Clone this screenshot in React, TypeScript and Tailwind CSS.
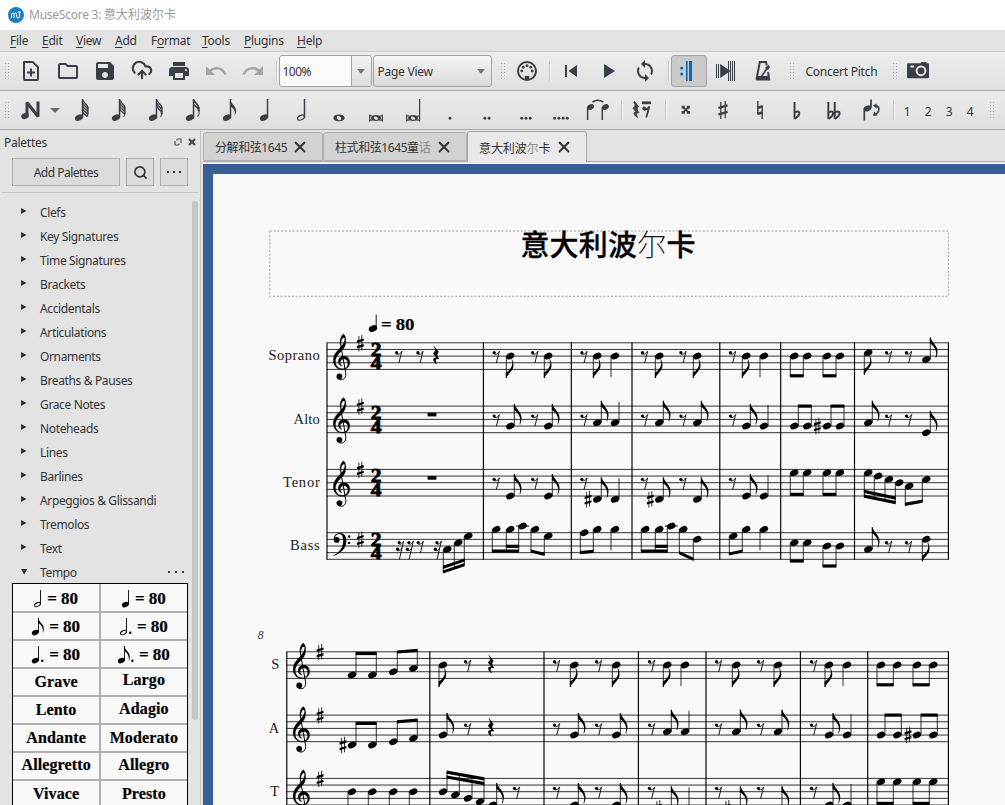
import React from "react";
import { CloudUpload, Search, X } from "lucide-react";
import { MdOutlineFolder, MdSave, MdPrint, MdUndo, MdRedo, MdSkipPrevious, MdPlayArrow, MdSync } from "react-icons/md";

const INK = "#3a3e46";
const SP = 6.65;

/* ---------- score engraving ---------- */

type Item =
  | { k: "n"; x: number; p: number; s: "u" | "d"; f?: boolean }
  | { k: "r8" | "r16" | "r4" | "r1"; x: number }
  | { k: "sh"; x: number; p: number }
  | { k: "b"; s: "u" | "d"; notes: [number, number][]; y1: number; y2: number; inner?: [number, number, number, number] };

const q = (x: number, p: number, s: "u" | "d" = "u"): Item => ({ k: "n", x, p, s });
const e = (x: number, p: number, s: "u" | "d" = "u"): Item => ({ k: "n", x, p, s, f: true });
const r = (x: number): Item => ({ k: "r8", x });
const r16 = (x: number): Item => ({ k: "r16", x });
const r4 = (x: number): Item => ({ k: "r4", x });
const r1 = (x: number): Item => ({ k: "r1", x });
const sh = (x: number, p: number): Item => ({ k: "sh", x, p });
const b = (
  s: "u" | "d",
  notes: [number, number][],
  y1: number,
  y2: number,
  inner?: [number, number, number, number],
): Item => ({ k: "b", s, notes, y1, y2, inner });

function Head({ x, y }: { x: number; y: number }) {
  return <ellipse cx={x} cy={y} rx="4.35" ry="3.05" transform={`rotate(-26 ${x} ${y})`} />;
}

function Sharp({ x, y }: { x: number; y: number }) {
  return (
    <g transform={`translate(${x} ${y})`}>
      <path d="M-1.4 -7.2V8.2M1.5 -8.2V7.2" stroke="#000" strokeWidth="0.8" />
      <path d="M-3.4 -2.1L3.4 -4.1V-1.8L-3.4 0.2zM-3.4 3.5L3.4 1.5V3.8L-3.4 5.8z" transform="translate(0 -0.6)" />
    </g>
  );
}

function EighthRest({ x, y }: { x: number; y: number }) {
  return (
    <g transform={`translate(${x} ${y})`}>
      <circle cx="-1.8" cy="-3.2" r="1.6" />
      <path d="M-2.6 -2.4C-0.6 -0.9 1.8 -1.6 3.3 -4.6L0.4 7" fill="none" stroke="#000" strokeWidth="0.9" />
    </g>
  );
}

function SixteenthRest({ x, y }: { x: number; y: number }) {
  return (
    <g transform={`translate(${x} ${y})`}>
      <circle cx="-0.8" cy="-3.2" r="1.6" />
      <circle cx="-2.4" cy="3.4" r="1.6" />
      <path
        d="M-1.6 -2.4C0.2 -0.9 2.2 -1.6 3.6 -4.6L-0.6 13.6M-3.2 4.2C-1.4 5.6 0.6 5 2 2.1"
        fill="none"
        stroke="#000"
        strokeWidth="0.9"
      />
    </g>
  );
}

function Flag({ x, y, up }: { x: number; y: number; up: boolean }) {
  return (
    <path
      transform={`translate(${x} ${y}) scale(1 ${up ? 1 : -0.92})`}
      d="M-0.4 0H0.3C0.8 4.2 7.3 8 7.2 13.8C7.2 16 6.6 18.4 5.8 20.4L5.2 20.2C6.7 16.2 5.9 12 3.2 9C2.2 7.9 1 6.6 -0.4 6Z"
    />
  );
}

function Treble({ x, y }: { x: number; y: number }) {
  return (
    <g transform={`translate(${x} ${y})`}>
      <path
        fillRule="evenodd"
        d="M10.2 -8.7C7.8 -7 6.4 -3.5 6.8 0.2L7.4 4.4C3.8 7.8 0 11.8 0 17.5C0 23 4 27 9 27C13.2 27 16.5 24 16.5 19.8C16.5 16 14 13.2 10.6 13.2C7.3 13.2 5 15.8 5 18.8C5 21.2 6.6 22.9 8.3 23.4L8.6 22.9C7.4 22 7 21 7 19.8C7 17.8 8.5 16.3 10.6 16.3C13 16.3 14.6 18 14.6 20.6C14.6 23.8 12.5 26 9.2 26C4.8 26 2.2 22.8 2.2 18.8C2.2 13.8 5.8 10.7 8.8 7.7C11.5 5 12.6 1.8 12.6 -2.5C12.6 -5.5 11.6 -7.8 10.2 -8.7ZM10.9 -5.4C11.6 -5 11.7 -3.5 11.2 -2C10.5 0.5 9.6 1.9 8.2 3.4L7.8 0.8C7.6 -2.5 9.2 -5.5 10.9 -5.4Z"
        stroke="#000"
        strokeWidth="0.25"
      />
      <path d="M7.7 4L12.4 30C13.1 34.2 11 36.9 8 36.9C6.4 36.9 5.2 36.3 4.6 35.4" fill="none" stroke="#000" strokeWidth="1" />
      <circle cx="6.1" cy="33.7" r="2.9" />
    </g>
  );
}

function Bass({ x, y }: { x: number; y: number }) {
  return (
    <g transform={`translate(${x} ${y})`}>
      <circle cx="3.3" cy="7.2" r="2.9" />
      <path d="M0.4 7C0.2 2.8 3 0.4 6.6 0.4C10.6 0.4 13 3.6 13 8.2C13 15.4 7.4 20.4 0.3 23.4L0 22.9C6.2 19.4 9.8 15 9.8 8.4C9.8 4.2 8.6 1.3 6 1.3C3.6 1.3 1.6 3 1.5 5.4Z" />
      <circle cx="15.7" cy="3.8" r="1.2" />
      <circle cx="15.7" cy="10.2" r="1.2" />
    </g>
  );
}

function Glyph({ it, top }: { it: Item; top: number }) {
  const Y = (p: number) => top + (p * SP) / 2;
  if (it.k === "r8") return <EighthRest x={it.x} y={top + 13.1} />;
  if (it.k === "r16") return <SixteenthRest x={it.x} y={top + 13.1} />;
  if (it.k === "r1") return <rect x={it.x - 4.4} y={top + 6.7} width="8.8" height="3.6" />;
  if (it.k === "r4")
    return (
      <path
        transform={`translate(${it.x} ${top})`}
        d="M-1.7 3.2L3 9.2C1 11.3 1 12.6 3.4 15.8L3 16.4C0.4 15.6 -1.2 17.2 1 20.8L0.6 21.4C-3.2 18.6 -4 14.6 0.6 14.8L-2.8 10.6C-0.2 8.2 0 6.6 -2.1 3.7Z"
      />
    );
  if (it.k === "sh") return <Sharp x={it.x} y={Y(it.p)} />;
  if (it.k === "n") {
    const up = it.s === "u";
    const sx = it.x + (up ? 4 : -4);
    const y = Y(it.p);
    const len = it.f ? 22 : 21;
    const end = y + (up ? -len : len);
    return (
      <g>
        <Head x={it.x} y={y} />
        <path d={`M${sx} ${y}V${end}`} stroke="#000" strokeWidth="0.8" />
        {it.f && <Flag x={sx} y={end} up={up} />}
      </g>
    );
  }
  const off = it.s === "u" ? 4 : -4;
  const first = it.notes[0][0];
  const last = it.notes[it.notes.length - 1][0];
  const at = (x: number) => top + it.y1 + ((it.y2 - it.y1) * (x - first)) / (last - first);
  const bar = (x1: number, y1: number, x2: number, y2: number) =>
    `M${x1 - 0.4} ${y1 - 1.6}L${x2 + 0.4} ${y2 - 1.6}V${y2 + 1.6}L${x1 - 0.4} ${y1 + 1.6}Z`;
  return (
    <g>
      {it.notes.map(([x, p]) => (
        <g key={x}>
          <Head x={x} y={Y(p)} />
          <path d={`M${x + off} ${Y(p)}V${at(x)}`} stroke="#000" strokeWidth="0.8" />
          {p === -2 && <path d={`M${x - 6.5} ${Y(-2)}h13`} stroke="#000" strokeWidth="1" />}
        </g>
      ))}
      <path d={bar(first + off, top + it.y1, last + off, top + it.y2)} />
      {it.inner && (
        <path d={bar(it.inner[0] + off, top + it.inner[1], it.inner[2] + off, top + it.inner[3])} />
      )}
    </g>
  );
}

const restsA = [496, 534.5, 583.7, 644.3, 682.7, 732.3, 888.3, 908.3].map(r);
const restsB = [556.3, 598.3, 651.3, 718.3, 760.3, 813.3].map(r);

const soprano1: Item[] = [
  r(398.5), r(419.7), r4(435.8), ...restsA,
  e(510.3, 4, "d"), e(548.3, 4, "d"), e(597.3, 4, "d"), q(615, 4, "d"),
  e(659.3, 4, "d"), e(697.3, 4, "d"), e(746.3, 4, "d"), q(764, 4, "d"),
  b("d", [[794.3, 4], [807.3, 4]], 33, 33), b("d", [[827, 4], [840, 4]], 33, 33),
  e(868.3, 3, "d"), e(926.3, 5),
];
const alto1: Item[] = [
  r1(432), ...restsA,
  e(510.3, 6), e(548.3, 6), e(597.3, 5), q(615, 5), e(659.3, 5), e(697.3, 5), e(746.3, 6), q(764, 6),
  b("u", [[794.3, 6], [807.3, 6]], 0, 0), sh(817.3, 6), b("u", [[827, 6], [840, 6]], 0, 0),
  e(868.3, 5), e(926.3, 8),
];
const tenor1: Item[] = [
  r1(432), ...restsA.slice(0, 6),
  e(510.3, 8), e(548.3, 8), sh(588, 9), e(597.3, 9), q(615, 9), sh(650.3, 9), e(659.3, 9), e(697.3, 9),
  e(746.3, 8), q(764, 8),
  b("d", [[794.3, 1], [807.3, 1]], 25, 25), b("d", [[827, 1], [840, 1]], 25, 25),
  b("d", [[868.3, 1], [878.3, 2], [889, 3], [899.3, 4]], 26.7, 33.3, [868.3, 22, 899.3, 28.7]),
  b("d", [[909.3, 5], [926.3, 3]], 35, 31.7),
];
const bass1: Item[] = [
  r16(400), r16(409.7), r(420), r16(437.7),
  b("d", [[447.3, 5], [458.3, 3], [468.3, 1]], 39.3, 32, [447.3, 34.6, 468.3, 27.3]),
  b("d", [[496.3, -1], [510.3, -1], [522.7, -2]], 18.4, 18.4, [510.3, 13.6, 522.7, 13.6]),
  b("d", [[535, -1], [548.3, 1]], 18.3, 21.7),
  b("d", [[584.3, 0], [597.3, -1]], 20, 18.7), q(615, -1, "d"),
  b("d", [[645.3, -1], [659.3, -1], [671.3, -2]], 18.4, 18.4, [659.3, 13.6, 671.3, 13.6]),
  b("d", [[683.3, -1], [697.3, 2]], 20, 26.7),
  b("d", [[733.3, 1], [746.3, -1]], 21.3, 18.3), q(764, -1, "d"),
  b("d", [[794.3, 3], [807.3, 3]], 28.3, 28.3), b("d", [[827, 4], [840, 4]], 33.3, 33.3),
  e(868.3, 5), r(888.3), r(908.3), e(926.3, 2, "d"),
];
const soprano2: Item[] = [
  b("u", [[352, 7], [372.3, 7]], 1.7, 1.7), b("u", [[393.3, 6], [413.3, 5]], 0.2, -1.4),
  e(443, 4, "d"), r(467.3), r4(490.7), ...restsB,
  e(574.3, 4, "d"), e(616.3, 4, "d"), e(667.3, 4, "d"), q(685, 4, "d"),
  e(736.3, 4, "d"), e(778, 4, "d"), e(829, 4, "d"), q(847, 4, "d"),
  b("d", [[881, 4], [897.3, 4]], 33, 33), b("d", [[917, 4], [933.3, 4]], 33, 33),
];
const alto2: Item[] = [
  sh(343, 9), b("u", [[352, 9], [372.3, 9]], 8.3, 8.3), b("u", [[393.3, 8], [413.3, 7]], 6.8, 4.9),
  e(443, 6), r(467.3), r4(490.7), ...restsB,
  e(574.3, 6), e(616.3, 6), e(667.3, 5), q(685, 5), e(736.3, 5), e(778, 5), e(829, 6), q(847, 6),
  b("u", [[881, 6], [897.3, 6]], 0, 0), sh(908, 6), b("u", [[917, 6], [933.3, 6]], 0, 0),
];
const tenor2: Item[] = [
  b("d", [[352, 4], [372.3, 4]], 33, 33), b("d", [[393.3, 4], [413.3, 4]], 33, 33),
  b("u", [[443, 4], [455.3, 5], [468, 6], [480, 7]], -6.2, 0.5, [443, -1.4, 480, 5.3]),
  e(492.7, 8), r(516.3), ...restsB,
  e(574.3, 8), e(616.3, 8), sh(658.3, 9), e(667.3, 9), q(685, 9), sh(727.3, 9), e(736.3, 9), e(778, 9),
  e(829, 8), q(847, 8),
  b("d", [[881, 1], [897.3, 1]], 25, 25), b("d", [[917, 1], [933.3, 1]], 25, 25),
];

function System({
  left, tops, bars, voices, names, bottom, time,
}: {
  left: number; tops: number[]; bars: number[]; voices: Item[][]; names: [string, number][]; bottom: number; time?: boolean;
}) {
  return (
    <g>
      {tops.map((t) =>
        [0, 1, 2, 3, 4].map((i) => (
          <path key={`${t}-${i}`} d={`M${left} ${t + i * SP}H948.8`} stroke="#111" strokeWidth="0.85" />
        )),
      )}
      {[left, ...bars].map((x) => (
        <path key={x} d={`M${x} ${tops[0] - 0.4}V${bottom}`} stroke="#000" strokeWidth="1.15" />
      ))}
      {tops.map((t, i) => {
        const bass = i === 3;
        return (
          <g key={t}>
            {bass ? <Bass x={left + 6.4} y={t} /> : <Treble x={left + 6.3} y={t} />}
            <Sharp x={left + 33.3} y={(bass ? t + SP : t) + 0.4} />
            {time && (
              <g fontFamily="Liberation Serif, serif" fontWeight="700" fontSize="18.5" stroke="#000" strokeWidth="0.8">
                <text x={left + 43.8} y={t + 12.9} textLength="10.4" lengthAdjust="spacingAndGlyphs">2</text>
                <text x={left + 43.8} y={t + 26.4} textLength="10.4" lengthAdjust="spacingAndGlyphs">4</text>
              </g>
            )}
            <text
              x={left - 7.5 - names[i][1]}
              y={t + 17.6}
              fontSize="14.5"
              fontFamily="Liberation Serif, serif"
              textLength={names[i][1]}
              fill="#222"
            >
              {names[i][0]}
            </text>
            {voices[i].map((it, j) => (
              <Glyph key={j} it={it} top={t} />
            ))}
          </g>
        );
      })}
    </g>
  );
}

function Score() {
  return (
    <svg className="block" width="792" height="507" viewBox="213 298 792 507">
      <Head x={373} y={328.6} />
      <path d="M376.2 328V314.6" stroke="#000" strokeWidth="0.9" />
      <text x="381" y="329.6" fontSize="16" fontWeight="700" fontFamily="Liberation Serif, serif" textLength="33" lengthAdjust="spacingAndGlyphs" stroke="#000" strokeWidth="0.2">
        = 80
      </text>
      <System
        left={327}
        tops={[342.8, 406.1, 469.4, 532.7]}
        bars={[483.4, 571.3, 632, 719.8, 780.7, 854.5, 948.4]}
        voices={[soprano1, alto1, tenor1, bass1]}
        names={[["Soprano", 51], ["Alto", 26], ["Tenor", 36.5], ["Bass", 29.5]]}
        bottom={559.7}
        time
      />
      <text x="257.8" y="639" fontSize="11.5" fontStyle="italic" fontFamily="Liberation Serif, serif" fill="#333">8</text>
      <System
        left={286.8}
        tops={[651.8, 715.1, 778.4]}
        bars={[429.8, 544, 638.4, 706, 800.4, 867.7, 948.4]}
        voices={[soprano2, alto2, tenor2]}
        names={[["S", 8], ["A", 10.5], ["T", 9]]}
        bottom={810}
      />
    </svg>
  );
}

/* ---------- toolbars ---------- */

function Grip({ className = "" }: { className?: string }) {
  return (
    <svg className={`shrink-0 ${className}`} width="5" height="17" fill="#aeaeae">
      {[0, 3, 6, 9, 12, 15].map((y) => (
        <g key={y}>
          <rect x="0" y={y} width="1" height="1" />
          <rect x="3" y={y} width="1" height="1" />
        </g>
      ))}
    </svg>
  );
}

function Sep({ className = "" }: { className?: string }) {
  return <div className={`h-5 w-[2px] shrink-0 border-l border-[#c4c4c4] bg-[#f8f8f8] ${className}`} />;
}

function Btn({ children, className = "" }: { children: React.ReactNode; className?: string }) {
  return <div className={`flex h-8 w-[37px] shrink-0 items-center justify-center text-[#3a3e46] ${className}`}>{children}</div>;
}

function I({ children, className = "" }: { children: React.ReactNode; className?: string }) {
  return (
    <svg width="24" height="24" viewBox="0 0 24 24" fill={INK} className={`overflow-visible ${className}`}>
      {children}
    </svg>
  );
}

function NoteIcon({ flags = 0, open = false }: { flags?: number; open?: boolean }) {
  return (
    <I>
      {open ? (
        <ellipse cx="9" cy="19.6" rx="3.7" ry="2.2" transform="rotate(-28 9 19.6)" fill="none" stroke={INK} strokeWidth="1.3" />
      ) : (
        <ellipse cx="9" cy="19.6" rx="4.3" ry="2.9" transform="rotate(-25 9 19.6)" />
      )}
      <path d="M12.5 19.5V1" stroke={INK} strokeWidth="1.5" />
      {flags === 1 && <path d="M12.3 1.5C12.8 6 18.4 8 18.2 13C18.2 14.8 17.4 16.4 16.4 18C17.8 13.5 16.2 10.6 12.3 8.6Z" />}
      {flags > 1 &&
        Array.from({ length: flags }, (_, k) => (
          <path
            key={k}
            d={`M12.8 ${2 + k * (flags === 2 ? 4.5 : 3)}C13.4 ${5 + k * 3} 18 ${6 + k * 3} 18 ${10.5 + k * (flags > 3 ? 2 : 3)}`}
            fill="none"
            stroke={INK}
            strokeWidth={flags === 2 ? 1.7 : 1.3}
          />
        ))}
      {flags > 1 && <path d="M18 9V16L16.6 19" fill="none" stroke={INK} strokeWidth="1" />}
    </I>
  );
}

const Dots = ({ n, dx = 0 }: { n: number; dx?: number }) => (
  <I>
    {Array.from({ length: n }, (_, i) => (
      <circle key={i} cx={12 + dx + (i - (n - 1) / 2) * 4.2} cy="20.3" r="1.45" />
    ))}
  </I>
);

const flatPath = "M0.8 0V14.6M0.8 9.6C2.6 7.6 5 7.8 5 10C5 12.2 3 13.2 0.8 14.8";

function DropArrow() {
  return (
    <svg width="8" height="5" fill="#777">
      <path d="M0 0H8L4 5Z" />
    </svg>
  );
}

const menus = ["File", "Edit", "View", "Add", "Format", "Tools", "Plugins", "Help"];
const menuWidths = ["w-[32px]", "w-[34px]", "w-[39px]", "w-[36px]", "w-[51px]", "w-[42px]", "w-[53px]", "w-[34px]"];
const menuKeys = [0, 0, 0, 0, 1, 0, 0, 0];

function Menu() {
  return (
    <div className="flex h-[21px] items-center bg-[#e3e3e3] pl-[10px] text-[#333]">
      {menus.map((m, i) => (
        <div key={m} className={`shrink-0 whitespace-nowrap ${menuWidths[i]}`}>
          {m.slice(0, menuKeys[i])}
          <span className="underline underline-offset-2">{m[menuKeys[i]]}</span>
          {m.slice(menuKeys[i] + 1)}
        </div>
      ))}
    </div>
  );
}

function MainToolbar() {
  return (
    <div className="flex h-10 items-center border-b border-[#ababab] border-t border-t-[#c8c8c8] bg-linear-to-b from-[#ededed] to-[#e0e0e0] pl-[5px]">
      <Grip className="mr-[2.5px]" />
      <Btn>
        <I>
          <path d="M5 2.9H13.6L19 8.3V19.4Q19 21 17.4 21H6.6Q5 21 5 19.4Z" fill="none" stroke={INK} strokeWidth="2" strokeLinejoin="round" />
          <path d="M12 9.5V17.5M8 13.5H16" stroke={INK} strokeWidth="2" />
        </I>
      </Btn>
      <Btn><MdOutlineFolder size={24} /></Btn>
      <Btn><MdSave size={24} /></Btn>
      <Btn>
        <CloudUpload size={22} strokeWidth={2.3} className="-mt-[2px]" />
      </Btn>
      <Btn><MdPrint size={24} /></Btn>
      <Btn className="text-[#a5a5a5]!"><MdUndo size={24} /></Btn>
      <Btn className="text-[#a5a5a5]!"><MdRedo size={24} /></Btn>
      <Sep className="ml-1 mr-px" />
      <div className="flex h-8 w-[93px] shrink-0 overflow-hidden rounded-[3px] border border-[#a3a3a3] bg-[#fafafa]">
        <div className="flex flex-1 items-center pt-[2px] pl-[3px] tracking-[-0.5px]">100%</div>
        <div className="flex w-5 items-center justify-center border-l border-[#a3a3a3] bg-linear-to-b from-[#f4f4f4] to-[#dcdcdc]"><DropArrow /></div>
      </div>
      <div className="ml-px flex h-8 w-[119px] shrink-0 items-center justify-between rounded-[3px] border border-[#a3a3a3] bg-linear-to-b from-[#f6f6f6] to-[#d9d9d9] pl-1 pr-[6px]">
        <span className="pt-[2px]">Page View</span>
        <DropArrow />
      </div>
      <Grip className="ml-[9px] mr-[2.5px]" />
      <Btn>
        <I>
          <circle cx="12" cy="12" r="9" fill="none" stroke={INK} strokeWidth="2" />
          <circle cx="6.8" cy="12" r="1.4" /><circle cx="8.3" cy="8.2" r="1.4" /><circle cx="12" cy="6.7" r="1.4" />
          <circle cx="15.7" cy="8.2" r="1.4" /><circle cx="17.2" cy="12" r="1.4" />
          <rect x="9.8" y="17" width="4.4" height="4" />
        </I>
      </Btn>
      <Sep className="ml-[3.5px] mr-[2px]" />
      <Btn><MdSkipPrevious size={24} /></Btn>
      <Btn><MdPlayArrow size={24} /></Btn>
      <Btn><MdSync size={24} /></Btn>
      <Sep className="ml-[4px] mr-px" />
      <div className="flex h-8 w-[36px] shrink-0 items-center justify-center rounded-[3px] border border-[#a5a5a5] bg-[#cacaca]">
        <svg width="24" height="24" fill="#0a66c2">
          <circle cx="4.7" cy="9" r="1.5" /><circle cx="4.7" cy="15" r="1.5" />
          <rect x="9" y="2" width="1.6" height="20" /><rect x="12" y="2" width="3" height="20" />
        </svg>
      </div>
      <Btn>
        <I>
          <path d="M3.5 5V19M5.5 5V19M15.5 2V22M17.5 2V22M19.5 2V22M21.5 2V22" stroke={INK} strokeWidth="1" />
          <path d="M7.2 5L17.5 12L7.2 19Z" />
        </I>
      </Btn>
      <Btn>
        <I className="ml-[2px]">
          <path d="M5.5 20.5L8.8 3H15L15.8 6.5M5.2 20.5H18.2L17 13" fill="none" stroke={INK} strokeWidth="2" />
          <path d="M10.5 17.5L18 6.5" stroke={INK} strokeWidth="1.6" />
          <path d="M14 9L17 6.5L19 8L17 11Z" /><path d="M5.6 17H17.8V21H5Z" />
        </I>
      </Btn>
      <Grip className="ml-[9px] mr-[11px]" />
      <div className="w-[87px] shrink-0 pt-[2px] whitespace-nowrap">Concert Pitch</div>
      <Grip className="mr-[2px]" />
      <Btn>
        <I>
          <path fillRule="evenodd" d="M2 4.2Q1 4.2 1 5.5V18Q1 19.2 2.4 19.2H21.6Q23 19.2 23 18V5.5Q23 4.2 21.6 4.2H20.5V3H15.5L14.6 4.2ZM15 6.4A5.4 5.4 0 1 1 15 17.2A5.4 5.4 0 1 1 15 6.4ZM4.4 6.5H8V8.6H4.4Z" />
          <circle cx="15" cy="11.8" r="3.4" />
        </I>
      </Btn>
    </div>
  );
}

function NoteToolbar() {
  return (
    <div className="flex h-[39px] items-center border-b border-[#ababab] bg-linear-to-b from-[#ebebeb] to-[#dfdfdf] pl-[5px]">
      <Grip className="mr-[2.5px]" />
      <Btn>
        <I>
          <path d="M8 18V4.5L19 18.5V3.5" fill="none" stroke={INK} strokeWidth="3" strokeLinejoin="bevel" />
          <ellipse cx="6" cy="18" rx="3.8" ry="3" transform="rotate(-20 6 18)" />
        </I>
      </Btn>
      <div className="flex w-[14px] pl-0"><svg width="10" height="5" fill="#6a6a6a"><path d="M0 0H10L5 5Z" /></svg></div>
      <Btn><NoteIcon flags={5} /></Btn>
      <Btn><NoteIcon flags={4} /></Btn>
      <Btn><NoteIcon flags={3} /></Btn>
      <Btn><NoteIcon flags={2} /></Btn>
      <Btn><NoteIcon flags={1} /></Btn>
      <Btn><NoteIcon /></Btn>
      <Btn><NoteIcon open /></Btn>
      <Btn>
        <I className="-ml-1"><path fillRule="evenodd" d="M6.4 20C6.4 15.4 17.6 15.4 17.6 20C17.6 24.4 6.4 24.4 6.4 20ZM9.8 19C9.6 22 14 23.6 14.2 21C14.4 18 10 16.6 9.8 19Z" /></I>
      </Btn>
      <Btn>
        <I className="-ml-1">
          <path fillRule="evenodd" d="M7 20C7 16 17 16 17 20C17 24 7 24 7 20ZM9.8 19.4C9.6 21.6 14 22.8 14.2 20.8C14.4 18.6 10 17.4 9.8 19.4Z" />
          <path d="M5.7 16.5V23.5M18.3 16.5V23.5M5.7 18H8.5M5.7 22.2H8.5M15.5 18H18.3M15.5 22.2H18.3" stroke={INK} strokeWidth="1.2" />
        </I>
      </Btn>
      <Btn>
        <I className="-ml-1">
          <path fillRule="evenodd" d="M7 20C7 16 17 16 17 20C17 24 7 24 7 20ZM9.8 19.4C9.6 21.6 14 22.8 14.2 20.8C14.4 18.6 10 17.4 9.8 19.4Z" />
          <path d="M5.7 16.5V23.5M18.6 1V23.5M5.7 18H8.5M5.7 22.2H8.5M15.5 18H18.3M15.5 22.2H18.3" stroke={INK} strokeWidth="1.2" />
        </I>
      </Btn>
      <Btn><Dots n={1} dx={-2} /></Btn>
      <Btn><Dots n={2} dx={-2} /></Btn>
      <Btn><Dots n={3} /></Btn>
      <Btn><Dots n={4} dx={-2} /></Btn>
      <Btn>
        <I>
          <ellipse cx="2.6" cy="9" rx="3.5" ry="2.6" transform="rotate(-24 2.6 9)" />
          <ellipse cx="17.4" cy="9" rx="3.5" ry="2.6" transform="rotate(-24 17.4 9)" />
          <path d="M-0.4 9V22M14.3 9V22" stroke={INK} strokeWidth="1.5" />
          <path d="M4.4 4.2Q9.8 0.4 15.4 4.2" fill="none" stroke={INK} strokeWidth="1.6" />
        </I>
      </Btn>
      <Sep className="ml-[2px]" />
      <Btn>
        <I>
          <path d="M5.5 3.5L9.5 8.5C7.6 10.6 7.8 11.6 10 14.8C7.4 14.4 6.8 16 8.5 19.4C5 17.6 3.6 14.4 7 13.8L4 10.4C6.4 8.4 6.6 7 4.8 4Z" stroke={INK} strokeWidth="0.9" />
          <rect x="13" y="3.4" width="9" height="2.8" />
          <circle cx="15.2" cy="10.4" r="1.9" />
          <path d="M14.8 11.6Q17.8 12.4 20.4 8.6L17.2 19.5" fill="none" stroke={INK} strokeWidth="1.8" />
        </I>
      </Btn>
      <Sep className="ml-[5px]" />
      <Btn>
        <I><path d="M9.8 8.8L15.8 14.6M15.8 8.8L9.8 14.6" stroke={INK} strokeWidth="1.8" /><path d="M8.6 7.8h3.2v2.8H8.6zM13.8 7.8h3.2v2.8h-3.2zM8.6 13h3.2v2.8H8.6zM13.8 13h3.2v2.8h-3.2z" /></I>
      </Btn>
      <Btn>
        <I>
          <path d="M10.8 4V21M15.2 3V20" stroke={INK} strokeWidth="1.3" />
          <path d="M8.4 10L17.6 7.4M8.4 16.4L17.6 13.8" stroke={INK} strokeWidth="2.3" />
        </I>
      </Btn>
      <Btn>
        <I><path d="M10.8 3V16.4M15.2 7.5V21" stroke={INK} strokeWidth="1.4" /><path d="M10.8 9.8L15.2 8.4M10.8 15.8L15.2 14.4" stroke={INK} strokeWidth="2.6" /></I>
      </Btn>
      <Btn>
        <I><g transform="translate(9.6 4) scale(1.15)"><path d={flatPath} fill="none" stroke={INK} strokeWidth="1.7" /></g></I>
      </Btn>
      <Btn>
        <I>
          <g transform="translate(6.4 4) scale(1.15)"><path d={flatPath} fill="none" stroke={INK} strokeWidth="1.7" /></g>
          <g transform="translate(12.8 4) scale(1.15)"><path d={flatPath} fill="none" stroke={INK} strokeWidth="1.7" /></g>
        </I>
      </Btn>
      <Btn>
        <I className="ml-1">
          <ellipse cx="7.6" cy="10.4" rx="4" ry="2.8" transform="rotate(-24 7.6 10.4)" />
          <path d="M4.3 10.5V22.5M11 1.5V9.5" stroke={INK} strokeWidth="1.7" />
          <path d="M14.5 8.2C20 6.5 20.5 14 14.5 17.2" fill="none" stroke={INK} strokeWidth="1.7" />
          <path d="M13 7.5L16.6 5.6V10.6ZM12.8 17.8L14.4 13.4L17.4 17.6Z" />
        </I>
      </Btn>
      <Sep className="ml-[4px] mr-[2px]" />
      {["1", "2", "3", "4"].map((n) => (
        <div key={n} className="w-[21px] shrink-0 pt-[3px] text-center">{n}</div>
      ))}
      <Grip className="ml-[9px]" />
    </div>
  );
}

/* ---------- palettes ---------- */

const palettes = [
  "Clefs", "Key Signatures", "Time Signatures", "Brackets", "Accidentals", "Articulations", "Ornaments",
  "Breaths & Pauses", "Grace Notes", "Noteheads", "Lines", "Barlines", "Arpeggios & Glissandi", "Tremolos", "Text",
];

function MiniNote({ open, flag, dot }: { open?: boolean; flag?: boolean; dot?: boolean }) {
  return (
    <svg width={(flag ? 12 : 8) + (dot ? 4 : 0)} height="18" className="shrink-0 overflow-visible">
      {open ? (
        <ellipse cx="3.4" cy="14.6" rx="3.2" ry="1.8" transform="rotate(-28 3.4 14.6)" fill="none" stroke="#000" strokeWidth="0.9" />
      ) : (
        <ellipse cx="3.4" cy="14.6" rx="3.7" ry="2.5" transform="rotate(-26 3.4 14.6)" />
      )}
      <path d="M6.5 14.5V0" stroke="#000" strokeWidth="0.9" />
      {flag && <path d="M6.3 0C6.8 4 11.8 6 11.8 10.4C11.8 12.4 11.4 13.6 10.8 15C11.4 10.8 10 7 6.3 5Z" />}
      {dot && <circle cx={flag ? 14.4 : 10.2} cy="14.8" r="1.2" />}
    </svg>
  );
}

const tempos: [React.ReactNode, React.ReactNode][] = [
  [<MiniNote open />, <MiniNote />],
  [<MiniNote flag />, <MiniNote open dot />],
  [<MiniNote dot />, <MiniNote flag dot />],
];
const words: [string, string, string, string][] = [
  ["Grave", "Largo", "pt-[4px]", "pt-[2px]"],
  ["Lento", "Adagio", "pt-[4px]", "pt-[3px]"],
  ["Andante", "Moderato", "pt-[4px]", "pt-[4px]"],
  ["Allegretto", "Allegro", "pt-[3px]", "pt-[3px]"],
  ["Vivace", "Presto", "pt-[4px]", "pt-[4px]"],
];

function Ellipsis() {
  return (
    <>
      <i className="size-[2px] bg-[#333]" />
      <i className="size-[2px] bg-[#333]" />
      <i className="size-[2px] bg-[#333]" />
    </>
  );
}

function Palettes() {
  return (
    <div className="relative h-[675px] w-[201px] shrink-0 overflow-hidden border-r border-[#c2c2c2] bg-[#e3e3e3] tracking-[-0.36px]">
      <div className="flex h-[23px] items-center pl-1 pr-[3px]">
        <span className="flex-1 pt-[2px] tracking-[-0.25px]">Palettes</span>
        <svg width="8" height="8" className="mr-[5px]" fill="none" stroke="#555" strokeWidth="1.2">
          <path d="M3 1H7V5M5 7H1V3M3 1V2.5M5 7V5.5" />
        </svg>
        <X size={10} strokeWidth={4.5} color="#444" />
      </div>
      <div className="mt-[5px] flex h-7 gap-[6px] pl-3">
        <div className="flex w-[108px] items-center justify-center border border-[#adadad] bg-[#dcdcdc] pt-[2px] tracking-[-0.5px]">Add Palettes</div>
        <div className="flex w-7 items-center justify-center border border-[#adadad] bg-[#dcdcdc]"><Search size={15} strokeWidth={2.6} color="#333" /></div>
        <div className="flex w-7 items-center justify-center gap-1 border border-[#adadad] bg-[#dcdcdc]">
          <Ellipsis />
        </div>
      </div>
      <div className="mx-[2px] mt-[6px] h-px bg-[#c6c6c6]" />
      <div className="pt-[7px]">
        {palettes.map((p) => (
          <div key={p} className="flex h-6 items-center pl-[21px]">
            <svg width="6" height="8" className="mb-[2px] mr-[13px]" fill="#333"><path d="M0 1L5.5 4L0 7Z" /></svg>
            <span className="pt-[2px]">{p}</span>
          </div>
        ))}
        <div className="flex h-6 items-center pl-5 pr-[15px]">
          <svg width="8" height="7" className="mb-[2px] mr-3" fill="#333"><path d="M1 1H7.4L4.2 6.4Z" /></svg>
          <span className="flex-1 pt-[2px]">Tempo</span>
          <span className="mr-px flex gap-[5px]"><Ellipsis /></span>
        </div>
      </div>
      <div className="ml-3 mt-[-1px] grid w-[176px] grid-cols-2 gap-x-[1.5px] gap-y-[1.5px] border border-b-0 border-black bg-[#b0b0b0] font-['Liberation_Serif',serif] tracking-normal text-black">
        {tempos.flat().map((t, i) => (
          <div key={i} className={`flex items-center justify-center gap-[5px] bg-[#f9f9f9] pt-[2px] ${i < 2 ? "h-[27px]" : "h-[26.5px]"}`}>
            {t}
            <span className="text-[17px] leading-none font-bold whitespace-nowrap [-webkit-text-stroke:0.2px_black]">= 80</span>
          </div>
        ))}
        {words.map(([a, c, pa, pc]) => (
          <React.Fragment key={a}>
            <div className={`h-[26.5px] bg-[#f9f9f9] text-center text-[16px] leading-[18px] font-bold tracking-[0.12px] [-webkit-text-stroke:0.2px_black] ${pa}`}>{a}</div>
            <div className={`h-[26.5px] bg-[#f9f9f9] text-center text-[16px] leading-[18px] font-bold tracking-[0.12px] [-webkit-text-stroke:0.2px_black] ${pc}`}>{c}</div>
          </React.Fragment>
        ))}
      </div>
      <div className="absolute top-[71px] left-[192px] h-[519px] w-[6px] rounded-full bg-[#c6c6c6]" />
    </div>
  );
}

/* ---------- documents ---------- */

function Tabs() {
  const idle = "flex h-[29px] items-center rounded-t-[3px] border border-[#b0b0b0] bg-[#d2d2d2] pl-[11px]";
  const label = "whitespace-nowrap pt-[3px]";
  return (
    <div className="flex h-8 items-end border-b border-[#b0b0b0] text-[12px] tracking-[-0.42px]">
      <div className={`${idle} w-[120px]`}><span className={`${label} w-[76px]`}>分解和弦1645</span><X size={18} strokeWidth={2.5} color="#333" /></div>
      <div className={`${idle} w-[144px]`}><span className={`${label} w-[100px]`}>柱式和弦1645童<span className="text-[#888]">话</span></span><X size={18} strokeWidth={2.5} color="#333" /></div>
      <div className="-mb-px flex h-[31px] w-[120px] items-center rounded-t-[3px] border border-b-0 border-[#a8a8a8] bg-[#e9e9e9] pl-[11px] tracking-[-0.1px]">
        <span className={`${label} w-[76px]`}>意大利波<span className="text-[#888]">尔</span>卡</span><X size={18} strokeWidth={2.5} color="#333" />
      </div>
    </div>
  );
}

export default function App() {
  return (
    <div className="h-[805px] w-[1005px] overflow-hidden bg-[#e3e3e3] font-['Noto_Sans','Noto_Sans_CJK_SC',sans-serif] text-[12px] leading-4 tracking-[-0.25px] text-[#333]">
      <div className="flex h-[30px] items-center bg-white pl-2 text-[#999]">
        <svg width="16" height="16" className="mr-[5px]">
          <circle cx="8" cy="8" r="8" fill="#1f7fbe" />
          <path d="M3.5 11V7.4Q3.5 6.2 4.8 6.2T6 7.4V11M6 7.4Q6 6.2 7.3 6.2T8.6 7.4V9.8Q8.6 11 10 11T11.6 9.8V5.2M9.6 5.4Q11 3.8 12.8 5.4" fill="none" stroke="#fff" strokeWidth="1" />
        </svg>
        <span>MuseScore 3: <span className="tracking-normal">意大利波尔卡</span></span>
      </div>
      <Menu />
      <MainToolbar />
      <NoteToolbar />
      <div className="flex">
        <Palettes />
        <div className="ml-[2px] h-[675px] min-w-0 flex-1">
          <Tabs />
          <div className="mt-px h-[642px] border-t border-white bg-[#385f94] pt-[10px] pl-[10px]">
            <div className="h-[631px] overflow-hidden bg-[#f9f9f9] pt-[56px]">
              <div className="relative ml-[56px] h-[68px] w-[681px] text-center font-['Noto_Sans_CJK_SC',sans-serif] text-[29px] leading-[27px] font-medium tracking-[0.2px] text-black">
                <svg width="681" height="68" className="absolute inset-0">
                  <rect x="0.8" y="1" width="678.6" height="65.3" fill="none" stroke="#a0a0a0" strokeWidth="1" strokeDasharray="2 1.8" />
                </svg>
                <span className="relative -left-[1.5px] [-webkit-text-stroke:0.3px_black]">意大利波<span className="font-thin">尔</span>卡</span>
              </div>
              <Score />
            </div>
          </div>
        </div>
      </div>
    </div>
  );
}
